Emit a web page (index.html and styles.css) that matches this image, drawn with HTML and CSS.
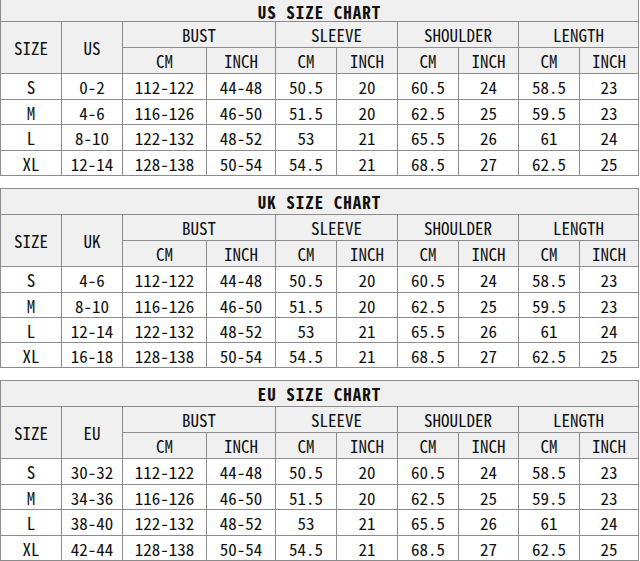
FILE: index.html
```html
<!DOCTYPE html>
<html>
<head>
<meta charset="utf-8">
<link rel="stylesheet" href="styles.css">
</head>
<body>
<div class="chart first">
  <div class="c title">US SIZE CHART</div>
  <div class="c hd r2">SIZE</div>
  <div class="c hd r2">US</div>
  <div class="c hd s2">BUST</div>
  <div class="c hd s2">SLEEVE</div>
  <div class="c hd s2">SHOULDER</div>
  <div class="c hd s2">LENGTH</div>
  <div class="c hd">CM</div><div class="c hd">INCH</div>
  <div class="c hd">CM</div><div class="c hd">INCH</div>
  <div class="c hd">CM</div><div class="c hd">INCH</div>
  <div class="c hd">CM</div><div class="c hd">INCH</div>
  <div class="c">S</div><div class="c">0-2</div><div class="c">112-122</div><div class="c">44-48</div><div class="c">50.5</div><div class="c">20</div><div class="c">60.5</div><div class="c">24</div><div class="c">58.5</div><div class="c">23</div>
  <div class="c">M</div><div class="c">4-6</div><div class="c">116-126</div><div class="c">46-50</div><div class="c">51.5</div><div class="c">20</div><div class="c">62.5</div><div class="c">25</div><div class="c">59.5</div><div class="c">23</div>
  <div class="c">L</div><div class="c">8-10</div><div class="c">122-132</div><div class="c">48-52</div><div class="c">53</div><div class="c">21</div><div class="c">65.5</div><div class="c">26</div><div class="c">61</div><div class="c">24</div>
  <div class="c">XL</div><div class="c">12-14</div><div class="c">128-138</div><div class="c">50-54</div><div class="c">54.5</div><div class="c">21</div><div class="c">68.5</div><div class="c">27</div><div class="c">62.5</div><div class="c">25</div>
</div>
<div class="chart second">
  <div class="c title">UK SIZE CHART</div>
  <div class="c hd r2">SIZE</div>
  <div class="c hd r2">UK</div>
  <div class="c hd s2">BUST</div>
  <div class="c hd s2">SLEEVE</div>
  <div class="c hd s2">SHOULDER</div>
  <div class="c hd s2">LENGTH</div>
  <div class="c hd">CM</div><div class="c hd">INCH</div>
  <div class="c hd">CM</div><div class="c hd">INCH</div>
  <div class="c hd">CM</div><div class="c hd">INCH</div>
  <div class="c hd">CM</div><div class="c hd">INCH</div>
  <div class="c">S</div><div class="c">4-6</div><div class="c">112-122</div><div class="c">44-48</div><div class="c">50.5</div><div class="c">20</div><div class="c">60.5</div><div class="c">24</div><div class="c">58.5</div><div class="c">23</div>
  <div class="c">M</div><div class="c">8-10</div><div class="c">116-126</div><div class="c">46-50</div><div class="c">51.5</div><div class="c">20</div><div class="c">62.5</div><div class="c">25</div><div class="c">59.5</div><div class="c">23</div>
  <div class="c">L</div><div class="c">12-14</div><div class="c">122-132</div><div class="c">48-52</div><div class="c">53</div><div class="c">21</div><div class="c">65.5</div><div class="c">26</div><div class="c">61</div><div class="c">24</div>
  <div class="c">XL</div><div class="c">16-18</div><div class="c">128-138</div><div class="c">50-54</div><div class="c">54.5</div><div class="c">21</div><div class="c">68.5</div><div class="c">27</div><div class="c">62.5</div><div class="c">25</div>
</div>
<div class="chart">
  <div class="c title">EU SIZE CHART</div>
  <div class="c hd r2">SIZE</div>
  <div class="c hd r2">EU</div>
  <div class="c hd s2">BUST</div>
  <div class="c hd s2">SLEEVE</div>
  <div class="c hd s2">SHOULDER</div>
  <div class="c hd s2">LENGTH</div>
  <div class="c hd">CM</div><div class="c hd">INCH</div>
  <div class="c hd">CM</div><div class="c hd">INCH</div>
  <div class="c hd">CM</div><div class="c hd">INCH</div>
  <div class="c hd">CM</div><div class="c hd">INCH</div>
  <div class="c">S</div><div class="c">30-32</div><div class="c">112-122</div><div class="c">44-48</div><div class="c">50.5</div><div class="c">20</div><div class="c">60.5</div><div class="c">24</div><div class="c">58.5</div><div class="c">23</div>
  <div class="c">M</div><div class="c">34-36</div><div class="c">116-126</div><div class="c">46-50</div><div class="c">51.5</div><div class="c">20</div><div class="c">62.5</div><div class="c">25</div><div class="c">59.5</div><div class="c">23</div>
  <div class="c">L</div><div class="c">38-40</div><div class="c">122-132</div><div class="c">48-52</div><div class="c">53</div><div class="c">21</div><div class="c">65.5</div><div class="c">26</div><div class="c">61</div><div class="c">24</div>
  <div class="c">XL</div><div class="c">42-44</div><div class="c">128-138</div><div class="c">50-54</div><div class="c">54.5</div><div class="c">21</div><div class="c">68.5</div><div class="c">27</div><div class="c">62.5</div><div class="c">25</div>
</div>
</body>
</html>
```

FILE: styles.css
```css
html, body {
  margin: 0;
  padding: 0;
  background: #ffffff;
}
body {
  width: 640px;
  height: 561px;
  overflow: hidden;
  font-family: "Noto Sans CJK SC", "DejaVu Sans Mono", monospace;
  font-feature-settings: "hwid" 1;
  font-size: 17px;
  color: #111;
  display: flex;
  flex-direction: column;
  gap: 12px;
}
.chart {
  width: 637px;
  display: grid;
  grid-template-columns: 60px 60px 83px 68px 60px 60px 60px 59px 60px 58px;
  grid-template-rows: 25px 25px 25px 25px 24px 25px 24px;
  gap: 1px;
  background: #8c8c8c;
  border: 1px solid #8c8c8c;
}
.chart.first {
  border-top: none;
  grid-template-rows: 21px 25px 25px 25px 24px 25px 24px;
}
.chart.second {
  grid-template-rows: 25px 25px 25px 25px 24px 24px 24px;
}
.c {
  background: #ffffff;
  display: flex;
  align-items: center;
  justify-content: center;
  line-height: 1;
  white-space: nowrap;
}
.hd {
  background: #f0f0f0;
}
.title {
  grid-column: 1 / -1;
  background: #f0f0f0;
  font-weight: bold;
  font-size: 17px;
  letter-spacing: 1px;
}
.first .title {
  padding-top: 2px;
}
.r2 {
  grid-row: span 2;
}
.s2 {
  grid-column: span 2;
}
```
